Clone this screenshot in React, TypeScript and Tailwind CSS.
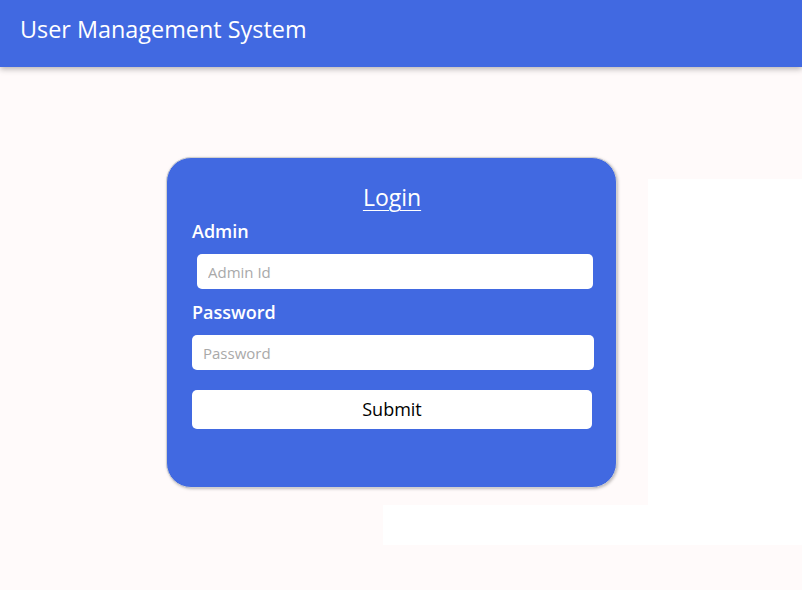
export default function App() {
  const font = { fontFamily: '"Open Sans", "DejaVu Sans", sans-serif' };
  return (
    <div className="relative min-h-[590px] w-full bg-[#fffafa] overflow-hidden" style={font}>
      <header className="relative z-10 h-[67px] bg-[#4169e1] shadow-[0_2px_6px_rgba(0,0,0,0.3)] flex items-center px-5">
        <h1 className="text-white text-[23.4px] leading-none -mt-[8px]">User Management System</h1>
      </header>
      <div className="absolute left-[648px] top-[179px] w-[154px] h-[326px] bg-white" />
      <div className="absolute left-[383px] top-[505px] w-[419px] h-[40px] bg-white" />
      <div className="relative z-10 pt-[90px] pl-[166px]">
        <div className="w-[451px] h-[331px] rounded-[25px] bg-[#4169e1] border border-[#d0d0d0] shadow-[1px_1px_3px_rgba(0,0,0,0.25)] pl-[25px] pr-6 pt-[24px]">
          <h2 className="text-center text-white text-[23px] leading-[30px] underline underline-offset-[4px] decoration-1">Login</h2>
          <label className="block text-white text-[18px] font-semibold leading-[24px] mt-[7px]">Admin</label>
          <input
            className="block ml-[5px] mt-[11px] w-[396px] h-[35px] rounded-[5px] bg-white px-[11px] text-[15px] outline-none placeholder:text-[#a9a9a9]"
            placeholder="Admin Id"
          />
          <label className="block text-white text-[18px] font-semibold leading-[24px] mt-[11px]">Password</label>
          <input
            type="password"
            className="block mt-[11px] w-[402px] h-[35px] rounded-[5px] bg-white px-[11px] text-[15px] outline-none placeholder:text-[#a9a9a9]"
            placeholder="Password"
          />
          <button className="block mt-[20px] w-[400px] h-[39px] rounded-[5px] bg-white text-black text-[18px]">Submit</button>
        </div>
      </div>
    </div>
  );
}
